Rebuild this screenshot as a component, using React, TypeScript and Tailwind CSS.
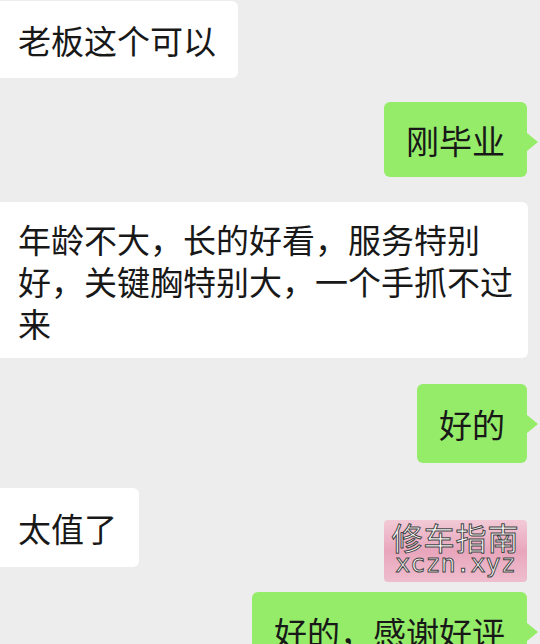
import React from "react";

const font = "font-['Noto_Sans_CJK_SC','Noto_Sans',sans-serif]";

function Tail() {
  return (
    <span className="absolute left-full top-[31px] h-0 w-0 border-y-[9px] border-l-[11px] border-y-transparent border-l-[#95ec69]" />
  );
}

export default function App() {
  return (
    <div className={`relative h-[644px] w-[540px] overflow-hidden bg-[#ededed] text-[33px] leading-[42px] text-[#181818] ${font}`}>
      <div className="flex flex-col">
        {/* 1 */}
        <div className="mt-[1px] self-start rounded-r-[6px] bg-white pl-[18px] pr-[22px] pt-[18px] pb-[17px]">
          老板这个可以
        </div>
        {/* 2 */}
        <div className="relative mt-[24px] mr-[13px] self-end rounded-[6px] bg-[#95ec69] px-[22px] pt-[17px] pb-[16px]">
          刚毕业
          <Tail />
        </div>
        {/* 3 */}
        <div className="mt-[25px] w-[528px] self-start rounded-r-[6px] bg-white pl-[18px] pr-[10px] pt-[16px] pb-[14px]">
          年龄不大，长的好看，服务特别好，关键胸特别大，一个手抓不过来
        </div>
        {/* 4 */}
        <div className="relative mt-[26px] mr-[13px] self-end rounded-[6px] bg-[#95ec69] px-[22px] pt-[19px] pb-[18px]">
          好的
          <Tail />
        </div>
        {/* 5 */}
        <div className="mt-[25px] self-start rounded-r-[6px] bg-white pl-[18px] pr-[22px] pt-[19px] pb-[18px]">
          太值了
        </div>
        {/* 6 */}
        <div className="relative mt-[25px] mr-[13px] self-end rounded-[6px] bg-[#95ec69] px-[22px] pt-[19px] pb-[18px]">
          好的，感谢好评
          <Tail />
        </div>
      </div>

      {/* watermark */}
      <div className="absolute left-[384px] top-[520px] flex h-[62px] w-[143px] flex-col items-center rounded-[4px] bg-gradient-to-b from-[#f3c9d6] via-[#e8a2ba] to-[#efbccd] opacity-95">
        <div className="mt-[1px] text-[31px] leading-[32px] tracking-[1px] text-white [-webkit-text-stroke:1px_#3c3c3c] font-['Noto_Sans_CJK_SC',sans-serif]">
          修车指南
        </div>
        <div className="-mt-[2px] text-[25px] leading-[26px] tracking-[0px] text-white [-webkit-text-stroke:1px_#3c3c3c] font-['DejaVu_Sans_Mono',monospace]">
          xczn.xyz
        </div>
      </div>
    </div>
  );
}
